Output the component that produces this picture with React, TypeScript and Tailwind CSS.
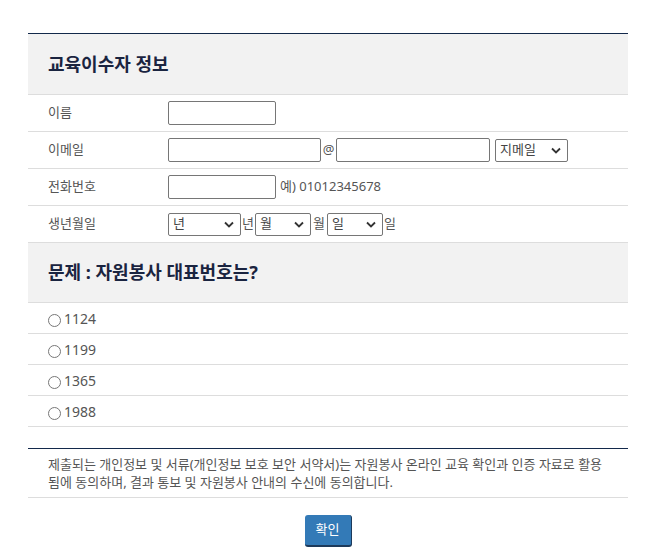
import React from "react";

const font = { fontFamily: '"Noto Sans", "Noto Sans CJK KR", sans-serif' };

const Row = ({ label, children }: { label: string; children: React.ReactNode }) => (
  <div className="flex items-center h-[37px] border-b border-[#dddddd]">
    <div className="w-[140px] pl-5 text-[13px] text-[#555555]">{label}</div>
    <div className="flex items-center text-[13px] text-[#555555]">{children}</div>
  </div>
);

const Select = ({ label, w }: { label: string; w: string }) => (
  <div
    className={`${w} h-[23px] border border-[#767676] rounded-[2px] flex items-center justify-between pl-1 pr-[6px] text-[13px] text-[#444444] bg-white`}
  >
    <span>{label}</span>
    <svg width="10" height="7" viewBox="0 0 10 7">
      <path d="M1 1.5 L5 5.5 L9 1.5" fill="none" stroke="#333" strokeWidth="1.8" />
    </svg>
  </div>
);

const Input = ({ w }: { w: string }) => (
  <div className={`${w} h-[24px] border border-[#767676] rounded-[2px] bg-white`} />
);

const options = ["1124", "1199", "1365", "1988"];

export default function App() {
  return (
    <div className="bg-white min-h-[556px] pt-[33px] pl-[28px]" style={font}>
      <div className="w-[600px] border-t border-[#13294b]">
        <div className="bg-[#f2f2f2] h-[61px] flex items-center pl-5 border-b border-[#dddddd]">
          <h2 className="text-[18px] font-bold text-[#1a2440]">교육이수자 정보</h2>
        </div>
        <Row label="이름">
          <Input w="w-[108px]" />
        </Row>
        <Row label="이메일">
          <Input w="w-[153px]" />
          <span className="w-[15px] text-center">@</span>
          <Input w="w-[154px]" />
          <div className="w-[5px]" />
          <Select label="지메일" w="w-[73px]" />
        </Row>
        <Row label="전화번호">
          <Input w="w-[108px]" />
          <span className="ml-1">예) 01012345678</span>
        </Row>
        <Row label="생년월일">
          <Select label="년" w="w-[73px]" />
          <span className="mx-[1px]">년</span>
          <Select label="월" w="w-[56px]" />
          <span className="mx-[2px]">월</span>
          <Select label="일" w="w-[56px]" />
          <span className="mx-[1px]">일</span>
        </Row>
        <div className="bg-[#f2f2f2] h-[60px] flex items-center pl-5 border-b border-[#dddddd]">
          <h2 className="text-[18px] font-bold text-[#1a2440]">문제 : 자원봉사 대표번호는?</h2>
        </div>
        {options.map((o) => (
          <div key={o} className="h-[31px] flex items-center pl-5 border-b border-[#dddddd] text-[14px] text-[#555555]">
            <span className="w-[13px] h-[13px] rounded-full border border-[#777777] mt-[5px] mr-[3px]" />
            <span>{o}</span>
          </div>
        ))}
        <div className="h-[21px]" />
        <div className="border-t border-[#13294b] border-b border-b-[#dddddd] px-5 pt-[6px] pb-[6px] text-[13px] leading-[18px] text-[#555555]">
          제출되는 개인정보 및 서류(개인정보 보호 보안 서약서)는 자원봉사 온라인 교육 확인과 인증 자료로 활용됨에 동의하며, 결과 통보 및 자원봉사 안내의 수신에 동의합니다.
        </div>
        <div className="flex justify-center pt-[17px]">
          <button className="w-[47px] h-[32px] bg-[#337ab7] text-white text-[13px] rounded-[3px] border-b-2 border-r border-[#1d3a5a]">
            확인
          </button>
        </div>
      </div>
    </div>
  );
}
